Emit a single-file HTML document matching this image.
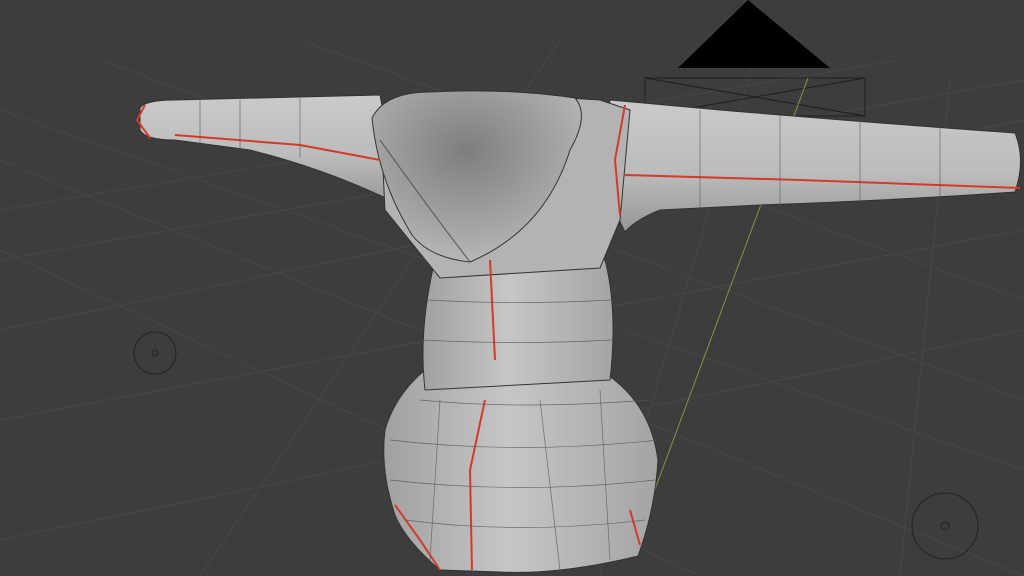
<!DOCTYPE html>
<html><head><style>
html,body{margin:0;padding:0;background:#3d3d3d;overflow:hidden}
svg{display:block}
</style></head><body>
<svg width="1024" height="576" viewBox="0 0 1024 576" xmlns="http://www.w3.org/2000/svg">
<defs>
<linearGradient id="g1" x1="0" y1="0" x2="1" y2="0">
<stop offset="0" stop-color="#a0a0a0"/><stop offset="0.45" stop-color="#c6c6c6"/><stop offset="1" stop-color="#a4a4a4"/>
</linearGradient>
<linearGradient id="arm" x1="0" y1="0" x2="0" y2="1">
<stop offset="0" stop-color="#cacaca"/><stop offset="0.55" stop-color="#bcbcbc"/><stop offset="1" stop-color="#969696"/>
</linearGradient>
<radialGradient id="hood" cx="0.45" cy="0.35" r="0.7">
<stop offset="0" stop-color="#7e7e7e"/><stop offset="0.7" stop-color="#a8a8a8"/><stop offset="1" stop-color="#bdbdbd"/>
</radialGradient>
</defs>
<rect width="1024" height="576" fill="#3d3d3d"/>
<g stroke="#474747" stroke-width="1" fill="none">
<path d="M0 330 L1024 120"/><path d="M0 260 L1024 80"/><path d="M0 210 L900 60"/>
<path d="M0 420 L1024 230"/><path d="M0 540 L1024 330"/>
<path d="M0 110 L1024 470"/><path d="M0 160 L1024 576"/><path d="M100 60 L1024 400"/>
<path d="M300 40 L1024 300"/><path d="M0 250 L700 576"/>
<path d="M200 576 L560 40"/><path d="M600 576 L760 40"/><path d="M900 576 L950 80"/>
</g>
<polygon points="678,68 748,0 830,68" fill="#000"/>
<g stroke="#1e1e1e" fill="none" stroke-width="1">
<rect x="645" y="78" width="220" height="38"/>
<path d="M645 78 L865 116 M865 78 L645 116"/>
</g>
<line x1="808" y1="78" x2="638" y2="535" stroke="#7a9a3a" stroke-width="1"/>
<circle cx="155" cy="353" r="21" fill="none" stroke="#222" stroke-width="1"/>
<circle cx="155" cy="353" r="3" fill="none" stroke="#222"/>
<circle cx="945" cy="526" r="33" fill="none" stroke="#222" stroke-width="1"/>
<circle cx="945" cy="526" r="4" fill="none" stroke="#222"/>
<!-- left arm -->
<path d="M140 108 Q145 100 175 100 L380 95 L400 205 Q330 170 250 150 L175 140 Q145 140 140 130 Z" fill="url(#arm)" stroke="#333"/>
<!-- right arm -->
<path d="M610 100 L720 110 Q900 125 1015 133 Q1026 160 1015 192 Q900 200 760 205 L660 210 Q635 220 625 232 L600 180 Z" fill="url(#arm)" stroke="#333"/>
<!-- hips -->
<path d="M425 370 L600 370 Q650 400 658 460 Q655 510 638 556 Q560 575 500 572 L440 570 Q405 540 395 515 Q380 470 385 430 Q395 395 425 370 Z" fill="url(#g1)" stroke="#333"/>
<!-- torso -->
<path d="M435 260 L605 260 Q618 310 610 380 L425 390 Q418 330 435 260 Z" fill="url(#g1)" stroke="#333"/>
<!-- chest/hood back -->
<path d="M380 110 L470 92 L600 100 L630 110 L620 220 L600 268 L440 278 L385 210 Z" fill="#b3b3b3" stroke="#333"/>
<path d="M372 118 Q385 92 430 92 Q510 88 575 98 Q590 115 570 150 Q545 230 470 262 Q430 258 412 235 Q378 180 372 118 Z" fill="url(#hood)" stroke="#333"/>
<path d="M380 140 Q430 210 470 262" stroke="#555" fill="none"/>
<g stroke="#d43a2a" stroke-width="2" fill="none">
<path d="M145 105 L137 120 L150 138"/>
<path d="M175 135 L300 145 L380 160"/>
<path d="M625 105 L615 160 L620 215"/>
<path d="M625 175 L800 180 L1020 188"/>
<path d="M490 260 L495 360"/>
<path d="M485 400 L470 470 L472 570"/>
<path d="M395 505 L420 540 L440 570"/>
<path d="M630 510 L640 545"/>
</g>
<g stroke="#555" stroke-width="0.7" fill="none" opacity="0.8">
<path d="M420 400 Q520 410 650 400"/><path d="M390 440 Q520 455 658 440"/>
<path d="M390 480 Q520 495 655 480"/><path d="M405 520 Q520 535 645 520"/>
<path d="M428 300 Q520 305 612 300"/><path d="M422 340 Q520 345 612 340"/>
<path d="M540 400 L560 570"/><path d="M600 390 L610 560"/><path d="M440 400 L430 560"/>
<path d="M240 100 L240 150"/><path d="M300 98 L300 158"/><path d="M200 98 L200 145"/>
<path d="M700 110 L700 210"/><path d="M780 115 L780 206"/><path d="M860 120 L860 202"/><path d="M940 125 L940 198"/>
</g>
</svg>
</body></html>
